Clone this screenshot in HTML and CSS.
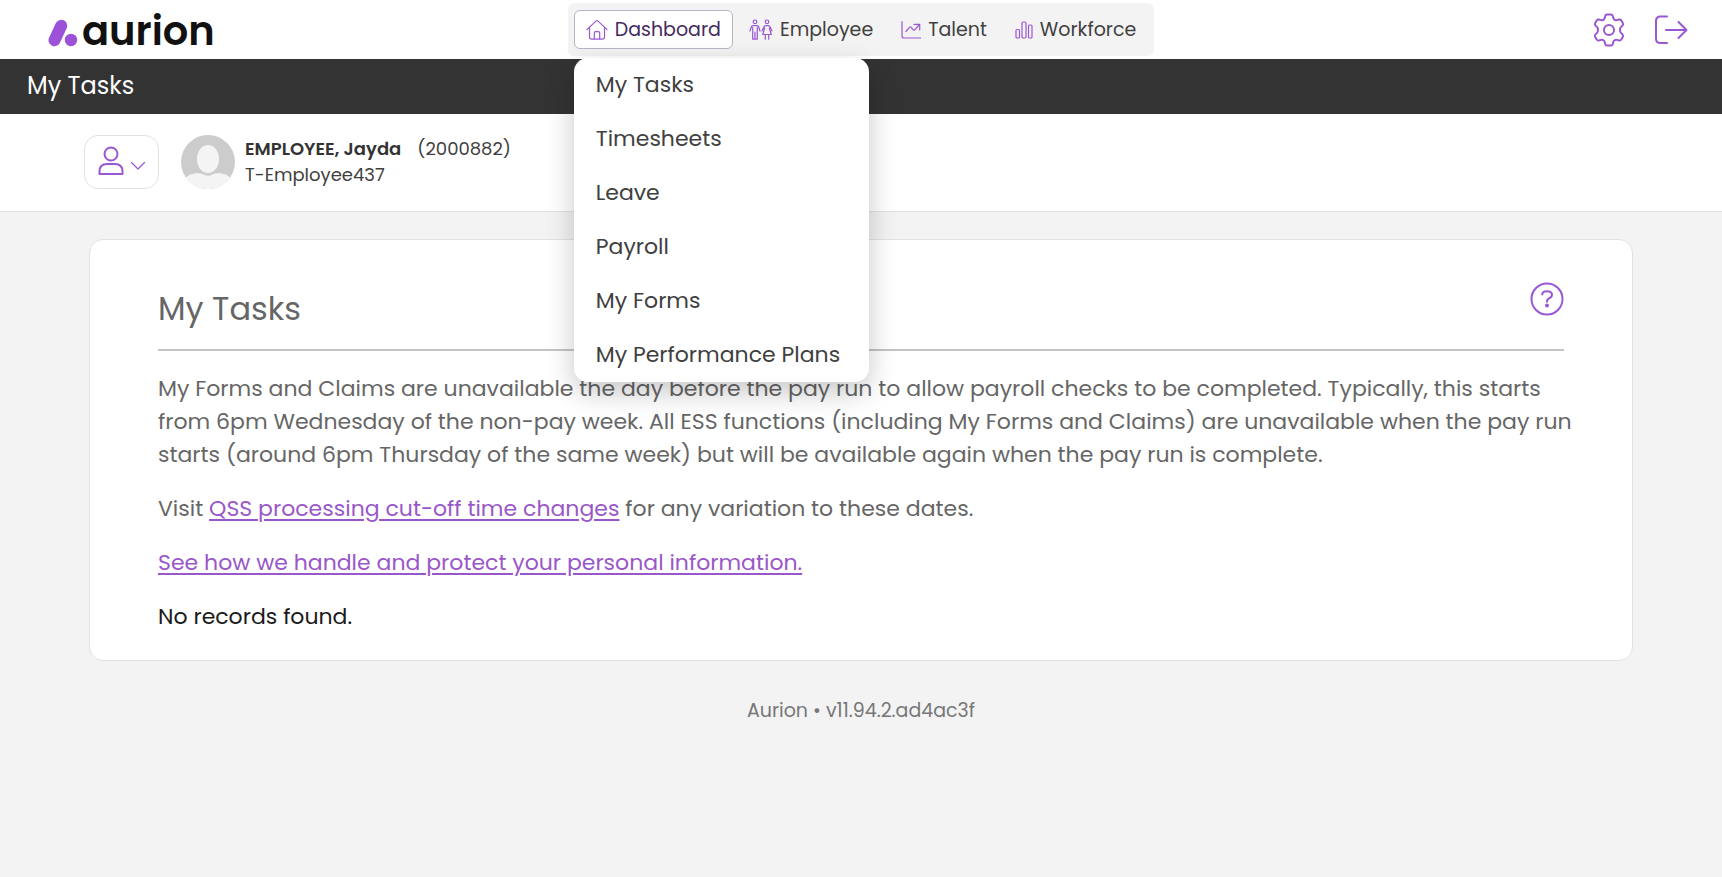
FILE: index.html
```html
<!DOCTYPE html>
<html lang="en">
<head>
<meta charset="utf-8">
<meta name="viewport" content="width=device-width, initial-scale=1">
<title>My Tasks - Aurion</title>
<link rel="stylesheet" href="styles.css">
</head>
<body>
<header class="topbar">
  <a class="logo" href="#">
    <svg class="logo-mark" width="30" height="28" viewBox="0 0 30 28" aria-hidden="true"><path d="M6.500 21.200 13.200 6.800" stroke="currentColor" stroke-width="12" stroke-linecap="round"/><circle cx="23" cy="21" r="6.200" fill="currentColor"/></svg>
    <span class="logo-text">aurion</span>
  </a>
  <nav class="main-nav" aria-label="Main">
    <ul class="nav-list">
      <li class="nav-item">
        <button class="nav-button nav-button-active" type="button" aria-expanded="true">
          <svg class="icon" width="22" height="22" viewBox="0 0 22 22" aria-hidden="true"><path d="M1 10.600 9.900 2.100Q11 1.100 12.100 2.100L21 10.600M3.500 8.500V18q0 2.200 2.200 2.200h10.600q2.200 0 2.200-2.200V8.500M8.300 20v-6q0-1.400 1.400-1.400h2.600q1.400 0 1.400 1.400v6"/></svg>
          Dashboard
        </button>
        <ul class="menu">
          <li><a class="menu-link" href="#">My Tasks</a></li>
          <li><a class="menu-link" href="#">Timesheets</a></li>
          <li><a class="menu-link" href="#">Leave</a></li>
          <li><a class="menu-link" href="#">Payroll</a></li>
          <li><a class="menu-link" href="#">My Forms</a></li>
          <li><a class="menu-link" href="#">My Performance Plans</a></li>
        </ul>
      </li>
      <li class="nav-item">
        <button class="nav-button" type="button">
          <svg class="icon" width="24" height="22" viewBox="0 0 24 22" aria-hidden="true"><circle cx="6" cy="2.800" r="1.800"/><circle cx="18" cy="2.800" r="1.800"/><path d="M1 12 2.300 8Q2.800 6.600 4 6.600h4Q9.200 6.600 9.700 8L11 12M3.700 8.500V20.200M8.300 8.500V20.200M3.700 20.200H5.200M6.800 20.200H8.300M6 13v7M13 12l2-4.200q.6-1.200 1.800-1.200h2.400q1.200 0 1.800 1.200L23 12M15.700 9l-2 6.500h8.600l-2-6.500M16.300 15.500v4.700M19.700 15.500v4.700"/></svg>
          Employee
        </button>
      </li>
      <li class="nav-item">
        <button class="nav-button" type="button">
          <svg class="icon" width="20" height="22" viewBox="0 0 20 22" aria-hidden="true"><path d="M1 2.500V17q0 2 2 2H19.500M5 12.500l3.600-4.300q.7-.8 1.400 0l2.300 2.600q.7.700 1.400 0L18.500 5.500M13 5.300h5.700V11"/></svg>
          Talent
        </button>
      </li>
      <li class="nav-item">
        <button class="nav-button" type="button">
          <svg class="icon" width="18" height="22" viewBox="0 0 18 22" aria-hidden="true"><rect x="1" y="10.500" width="3.500" height="8.500" rx="1"/><rect x="7" y="3" width="4" height="16" rx="1.200"/><rect x="13.500" y="6" width="3.500" height="13" rx="1"/></svg>
          Workforce
        </button>
      </li>
    </ul>
  </nav>
  <div class="actions">
    <button class="icon-button" type="button" aria-label="Settings">
      <svg class="icon icon-large" width="34" height="34" viewBox="0 0 34 34" aria-hidden="true"><circle cx="17" cy="17" r="5"/><path d="M15.200 1.500h3.600q1.600 0 2 1.600l.5 2q.3 1.200 1.400 1.700 1.200.6 2.300.3l2-.6q1.500-.4 2.300.9l1.500 2.700q.8 1.400-.3 2.500l-1.500 1.500Q28 15 28 17t1 2.900l1.500 1.500q1.100 1.100.3 2.500l-1.500 2.700q-.8 1.300-2.300.9l-2-.6q-1.100-.3-2.300.3-1.100.5-1.400 1.700l-.5 2q-.4 1.600-2 1.600h-3.600q-1.600 0-2-1.600l-.5-2q-.3-1.200-1.400-1.700-1.200-.6-2.300-.3l-2 .6q-1.500.4-2.300-.9l-1.500-2.700q-.8-1.400.3-2.500L5 19.900Q6 19 6 17t-1-2.900l-1.500-1.500q-1.100-1.100-.3-2.500l1.500-2.700q.8-1.300 2.300-.9l2 .6q1.100.3 2.300-.3 1.100-.5 1.400-1.700l.5-2q.4-1.600 2-1.600z"/></svg>
    </button>
    <button class="icon-button" type="button" aria-label="Log out">
      <svg class="icon icon-large" width="34" height="34" viewBox="0 0 34 34" aria-hidden="true"><path d="M13 3.500H6.500Q2 3.500 2 8v17.500Q2 30 6.500 30H13M12 17h20M24.500 9 32.500 17l-8 8"/></svg>
    </button>
  </div>
</header>

<div class="page-bar">My Tasks</div>

<section class="profile" aria-label="Employee">
  <button class="profile-button" type="button" aria-label="Select employee">
    <svg class="icon icon-large person" width="26" height="30" viewBox="0 0 26 30" aria-hidden="true"><circle cx="13" cy="8" r="6.500"/><path d="M1.500 28v-2.500q0-7.500 7.500-7.500h8q7.500 0 7.500 7.500V28z"/></svg>
    <svg class="icon chevron" width="16" height="10" viewBox="0 0 16 10" aria-hidden="true"><path d="M1.500 1.500 8 8l6.500-6.500"/></svg>
  </button>
  <svg class="avatar" width="54" height="54" viewBox="0 0 54 54" aria-hidden="true"><defs><clipPath id="avatar-clip"><circle cx="27" cy="27" r="27"/></clipPath></defs><g clip-path="url(#avatar-clip)"><path fill="#cccccc" d="M0 0h54v54H0z"/><ellipse cx="27" cy="24" rx="11" ry="14" fill="#f4f4f4"/><path fill="#f4f4f4" d="M3 54V45Q7 38.500 16 38q4 0 6.500 1.600 4.500 2.400 9 0Q34 38 38 38q9 .5 13 7v9z"/></g></svg>
  <div class="profile-text">
    <div class="profile-line"><strong>EMPLOYEE, Jayda</strong><span>(2000882)</span></div>
    <div>T-Employee437</div>
  </div>
</section>

<main class="content">
  <section class="card">
    <div class="card-head">
      <h1 class="card-title">My Tasks</h1>
      <button class="icon-button" type="button" aria-label="Help">
        <svg class="icon icon-large" width="34" height="34" viewBox="0 0 34 34" aria-hidden="true"><circle cx="17" cy="17" r="15.500"/><path d="M12.200 12.500Q12.500 9.200 17 9.200q5 0 5 3.600 0 2.200-2.500 3.300Q17 17.200 17 19.800"/><circle cx="17" cy="23.500" r="1" fill="currentColor"/></svg>
      </button>
    </div>
    <p class="text">My Forms and Claims are unavailable the day before the pay run to allow payroll checks to be completed. Typically, this starts from 6pm Wednesday of the non-pay week. All ESS functions (including My Forms and Claims) are unavailable when the pay run starts (around 6pm Thursday of the same week) but will be available again when the pay run is complete.</p>
    <p class="text">Visit <a class="link" href="#">QSS processing cut-off time changes</a> for any variation to these dates.</p>
    <p class="text"><a class="link" href="#">See how we handle and protect your personal information.</a></p>
    <p class="text text-strong">No records found.</p>
  </section>
</main>

<footer class="footer">Aurion • v11.94.2.ad4ac3f</footer>
</body>
</html>
```
FILE: styles.css
```css
* {
  box-sizing: border-box;
}

body {
  margin: 0;
  background: #f3f3f3;
  color: #404040;
  font-family: "Poppins", "Inter", sans-serif;
  font-size: 22px;
  font-weight: 400;
  line-height: 33px;
}

button {
  font: inherit;
  color: inherit;
  cursor: pointer;
}

ul {
  margin: 0;
  padding: 0;
  list-style: none;
}

.icon {
  flex: none;
  fill: none;
  stroke: currentColor;
  stroke-width: 1.2;
  stroke-linecap: round;
  stroke-linejoin: round;
  color: #9a57d3;
}

.icon-large {
  stroke-width: 2;
}

.topbar {
  display: grid;
  grid-template-columns: 1fr auto 1fr;
  align-items: center;
  height: 59px;
  padding: 0 34px;
  background: #ffffff;
}

.logo {
  display: flex;
  align-items: center;
  gap: 4px;
  padding-left: 14px;
  color: #111111;
  text-decoration: none;
}

.logo-mark {
  margin-top: 6px;
  color: #9b51d8;
}

.logo-text {
  padding-top: 4px;
  font-size: 40px;
  font-weight: 600;
  line-height: 55px;
}

.main-nav {
  padding: 7px 6px;
  border-radius: 6px;
  background: #f3f3f3;
}

.nav-list {
  display: flex;
  gap: 4px;
}

.nav-item {
  position: relative;
}

.nav-button {
  display: flex;
  align-items: center;
  gap: 7px;
  height: 39px;
  padding: 0 11px;
  border: 1px solid transparent;
  border-radius: 6px;
  background: none;
  font-size: 19px;
}

.nav-button-active {
  border-color: #b9b3c6;
  background: #ffffff;
  color: #462a5c;
}

.menu {
  position: absolute;
  top: 48px;
  left: 0;
  z-index: 10;
  width: 295px;
  border-radius: 14px;
  background: #ffffff;
  box-shadow: 0 10px 28px rgba(0, 0, 0, 0.22);
}

.menu-link {
  display: block;
  padding: 10px 22px 11px;
  color: #404040;
  text-decoration: none;
  white-space: nowrap;
}

.actions {
  display: flex;
  justify-content: flex-end;
  gap: 28px;
}

.icon-button {
  display: flex;
  padding: 0;
  border: 0;
  background: none;
}

.page-bar {
  padding: 10px 27px 12px;
  background: #333333;
  color: #ffffff;
  font-size: 24px;
}

.profile {
  display: flex;
  align-items: center;
  height: 98px;
  padding: 0 84px 2px;
  border-bottom: 1px solid #e2e2e2;
  background: #ffffff;
  font-size: 18px;
  line-height: 26px;
}

.profile-button {
  display: flex;
  align-items: center;
  gap: 6px;
  height: 54px;
  padding: 0 12px 0 13px;
  border: 1px solid #e2e2e2;
  border-radius: 14px;
  background: #ffffff;
}

.person {
  margin-bottom: 2px;
}

.chevron {
  margin-top: 8px;
}

.avatar {
  flex: none;
  margin: 0 10px 0 22px;
}

.profile-line {
  display: flex;
  gap: 16px;
}

.profile-line strong {
  color: #333333;
  font-weight: 600;
}

.content {
  padding: 27px 89px 0;
}

.card {
  padding: 42px 58px 27px 68px;
  border: 1px solid #e2e2e2;
  border-radius: 14px;
  background: #ffffff;
}

.card-head {
  display: flex;
  align-items: flex-start;
  justify-content: space-between;
  margin-right: 10px;
  margin-bottom: 21px;
  padding-bottom: 18px;
  border-bottom: 2px solid #c4c4c4;
}

.card-title {
  margin: 0;
  padding-top: 5px;
  color: #666666;
  font-size: 32px;
  font-weight: 400;
  line-height: 44px;
}

.text {
  margin: 0 0 21px;
  color: #666666;
}

.text:last-child {
  margin-bottom: 0;
}

.text-strong {
  color: #1a1a1a;
}

.link {
  color: #9a57c9;
  text-underline-offset: 3px;
}

.footer {
  padding: 33px 0;
  color: #777777;
  font-size: 19px;
  text-align: center;
}
```
